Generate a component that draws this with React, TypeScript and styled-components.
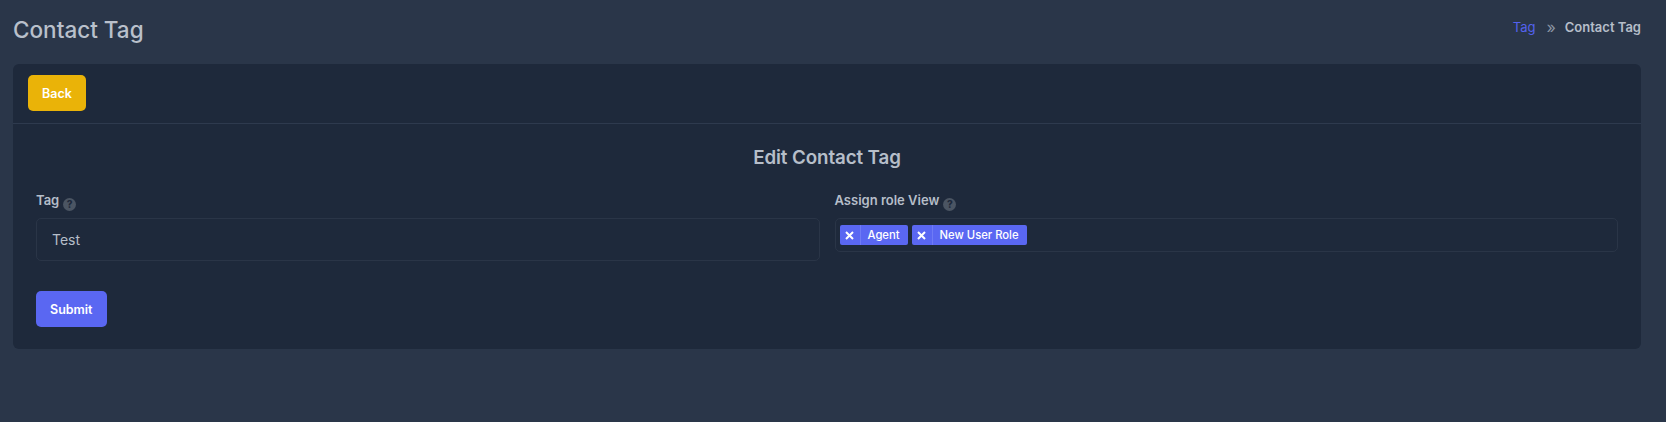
import React from 'react';
import styled, { createGlobalStyle } from 'styled-components';

const GlobalStyle = createGlobalStyle`
  html, body {
    margin: 0;
    padding: 0;
    background: #2a3649;
    font-family: Inter, "Liberation Sans", sans-serif;
  }
`;

const Page = styled.div`
  min-height: 422px;
  padding: 0 25px 0 13px;
  box-sizing: border-box;
`;

const TopBar = styled.div`
  height: 64px;
  display: flex;
  align-items: center;
  justify-content: space-between;
`;

const PageTitle = styled.h1`
  margin: -5px 0 0;
  font-size: 22.5px;
  line-height: 32px;
  font-weight: 500;
  color: #b9c0cb;
`;

const Breadcrumb = styled.div`
  display: flex;
  align-items: center;
  margin-top: -10px;
  font-size: 13px;
  line-height: 20px;
  font-weight: 600;
  color: #b6bec9;
`;

const CrumbLink = styled.a`
  color: #5462ee;
  font-weight: 400;
`;

const CrumbSep = styled.span`
  margin: 0 9px 0 11px;
  color: #8b94a3;
  font-size: 16px;
  font-weight: 400;
`;

const Card = styled.div`
  background: #1e293b;
  border-radius: 6px;
  height: 285px;
`;

const CardHead = styled.div`
  height: 60px;
  padding: 11px 15px 0;
  box-sizing: border-box;
  border-bottom: 1px solid #2e3a4e;
`;

const Button = styled.button<{ $color: string }>`
  height: 36px;
  padding: 0 14px;
  border: none;
  border-radius: 5px;
  background: ${props => props.$color};
  color: #fff;
  font-family: inherit;
  font-size: 12.5px;
  font-weight: 600;
`;

const CardBody = styled.div`
  padding: 20px 23px 0;
`;

const FormTitle = styled.h2`
  margin: 0 0 18px;
  text-align: center;
  font-size: 18.75px;
  line-height: 28px;
  font-weight: 600;
  letter-spacing: -0.1px;
  color: #b6bec9;
`;

const FormGrid = styled.div`
  display: grid;
  grid-template-columns: 1fr 1fr;
  column-gap: 15px;
`;

const Label = styled.label`
  display: flex;
  align-items: flex-start;
  gap: 4px;
  height: 28px;
  font-size: 13px;
  line-height: 20px;
  font-weight: 600;
  color: #b6bec9;
`;

const Help = styled.span`
  width: 13px;
  height: 13px;
  margin-top: 8px;
  border-radius: 50%;
  background: #4b5563;
  color: #1e293b;
  display: flex;
  align-items: center;
  justify-content: center;
  font-size: 10px;
  line-height: 13px;
  font-weight: 800;
`;

const TextBox = styled.div`
  height: 43px;
  padding: 0 15px;
  display: flex;
  align-items: center;
  box-sizing: border-box;
  border: 1px solid #2a3547;
  border-radius: 5px;
  font-size: 14px;
  color: #b6bec9;
`;

const TagBox = styled.div`
  height: 34px;
  padding: 6px 4px;
  display: flex;
  gap: 4px;
  box-sizing: border-box;
  border: 1px solid #2a3547;
  border-radius: 5px;
`;

const Chip = styled.span`
  height: 20px;
  display: flex;
  align-items: center;
  background: #5a67f2;
  border-radius: 2px;
  color: #fff;
  font-size: 11.25px;
  font-weight: 500;
  line-height: 20px;
`;

const ChipRemove = styled.span`
  width: 20px;
  height: 20px;
  display: flex;
  align-items: center;
  justify-content: center;
  border-right: 1px solid #6f7bf5;
`;

const ChipLabel = styled.span`
  padding: 0 8px 0 7px;
`;

const FormFoot = styled.div`
  margin-top: 30px;
`;

const RemoveIcon = () => (
  <svg width="9" height="9" viewBox="0 0 9 9">
    <path d="M1 1l7 7M8 1L1 8" stroke="#fff" strokeWidth="2" />
  </svg>
);

const App: React.FC = () => {
  return (
    <Page>
      <GlobalStyle />
      <TopBar>
        <PageTitle>Contact Tag</PageTitle>
        <Breadcrumb>
          <CrumbLink>Tag</CrumbLink>
          <CrumbSep>»</CrumbSep>
          Contact Tag
        </Breadcrumb>
      </TopBar>
      <Card>
        <CardHead>
          <Button $color="#eab308">Back</Button>
        </CardHead>
        <CardBody>
          <FormTitle>Edit Contact Tag</FormTitle>
          <FormGrid>
            <div>
              <Label>
                Tag <Help>?</Help>
              </Label>
              <TextBox>Test</TextBox>
            </div>
            <div>
              <Label>
                Assign role View <Help>?</Help>
              </Label>
              <TagBox>
                <Chip>
                  <ChipRemove><RemoveIcon /></ChipRemove>
                  <ChipLabel>Agent</ChipLabel>
                </Chip>
                <Chip>
                  <ChipRemove><RemoveIcon /></ChipRemove>
                  <ChipLabel>New User Role</ChipLabel>
                </Chip>
              </TagBox>
            </div>
          </FormGrid>
          <FormFoot>
            <Button $color="#5a67f2">Submit</Button>
          </FormFoot>
        </CardBody>
      </Card>
    </Page>
  );
};

export default App;
